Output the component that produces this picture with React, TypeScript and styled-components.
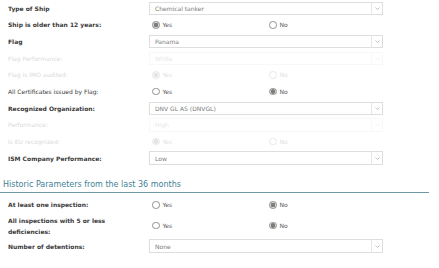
import styled, { createGlobalStyle } from 'styled-components'

const GlobalStyle = createGlobalStyle`
  body {
    margin: 0;
    background: #fff;
    font-family: 'DejaVu Sans', Verdana, sans-serif;
  }
`

const Page = styled.div`
  width: 439px;
  height: 268px;
  overflow: hidden;
`

const Section = styled.div<{ gapTop?: number }>`
  padding-left: 8px;
  padding-top: ${({ gapTop }) => gapTop || 0}px;
`

const Row = styled.div<{ disabled?: boolean; tall?: boolean }>`
  display: grid;
  grid-template-columns: 141px 234px;
  align-items: center;
  height: ${({ tall }) => (tall ? '24.7px' : '16.67px')};
  opacity: ${({ disabled }) => (disabled ? 0.2 : 1)};
`

const Label = styled.div<{ strong?: boolean; wrap?: boolean }>`
  font-size: 6px;
  line-height: 11px;
  color: #3a3a3a;
  font-weight: ${({ strong }) => (strong ? 700 : 400)};
  width: ${({ wrap }) => (wrap ? '110px' : 'auto')};
`

const Select = styled.div`
  display: flex;
  align-items: stretch;
  height: 13.5px;
  box-sizing: border-box;
  border: 1px solid #dedede;
  background: #fff;
`

const SelectValue = styled.div`
  flex: 1;
  display: flex;
  align-items: center;
  padding-left: 5px;
  font-size: 6px;
  color: #7a7a7a;
`

const Chevron = styled.div`
  width: 10px;
  border-left: 1px solid #e6e6e6;
  display: flex;
  align-items: center;
  justify-content: center;
`

const Radios = styled.div`
  display: grid;
  grid-template-columns: 117px 117px;
`

const Option = styled.div`
  display: flex;
  align-items: center;
  gap: 3px;
  padding-left: 3px;
  font-size: 6px;
  color: #555;
`

const Circle = styled.span<{ checked?: boolean }>`
  width: 7.5px;
  height: 7.5px;
  box-sizing: border-box;
  border-radius: 50%;
  border: 1px solid #8f8f8f;
  background: ${({ checked }) =>
    checked
      ? 'radial-gradient(circle, #7d7d7d 0 2px, #d9d9d9 2.5px)'
      : '#fff'};
`

const Heading = styled.h2`
  margin: 11px 10px 0 0;
  padding: 0 0 1px 3px;
  font-size: 8px;
  line-height: 13px;
  font-weight: 400;
  color: #3f7f97;
  border-bottom: 1px solid #6f98a6;
`

type Field =
  | { label: string; strong?: boolean; disabled?: boolean; tall?: boolean; select: string }
  | { label: string; strong?: boolean; disabled?: boolean; tall?: boolean; yes: boolean }

const shipFields: Field[] = [
  { label: 'Type of Ship', strong: true, select: 'Chemical tanker' },
  { label: 'Ship is older than 12 years:', strong: true, yes: true },
  { label: 'Flag', strong: true, select: 'Panama' },
  { label: 'Flag Performance:', disabled: true, select: 'White' },
  { label: 'Flag is IMO audited:', disabled: true, yes: true },
  { label: 'All Certificates issued by Flag:', yes: false },
  { label: 'Recognized Organization:', strong: true, select: 'DNV GL AS (DNVGL)' },
  { label: 'Performance:', disabled: true, select: 'High' },
  { label: 'Is EU recognized:', disabled: true, yes: true },
  { label: 'ISM Company Performance:', strong: true, select: 'Low' },
]

const historyFields: Field[] = [
  { label: 'At least one inspection:', strong: true, yes: false },
  { label: 'All inspections with 5 or less deficiencies:', strong: true, tall: true, yes: false },
  { label: 'Number of detentions:', strong: true, select: 'None' },
]

const FieldRow = ({ field }: { field: Field }) => (
  <Row disabled={field.disabled} tall={field.tall}>
    <Label strong={field.strong} wrap={field.tall}>
      {field.label}
    </Label>
    {'select' in field ? (
      <Select>
        <SelectValue>{field.select}</SelectValue>
        <Chevron>
          <svg width="5" height="3" viewBox="0 0 5 3">
            <path d="M0.5 0.5 L2.5 2.5 L4.5 0.5" fill="none" stroke="#a8a8a8" strokeWidth="0.7" />
          </svg>
        </Chevron>
      </Select>
    ) : (
      <Radios>
        <Option>
          <Circle checked={field.yes} />
          Yes
        </Option>
        <Option>
          <Circle checked={!field.yes} />
          No
        </Option>
      </Radios>
    )}
  </Row>
)

export default function App() {
  return (
    <Page>
      <GlobalStyle />
      <Section>
        {shipFields.map((f) => (
          <FieldRow key={f.label} field={f} />
        ))}
      </Section>
      <Heading>Historic Parameters from the last 36 months</Heading>
      <Section gapTop={4}>
        {historyFields.map((f) => (
          <FieldRow key={f.label} field={f} />
        ))}
      </Section>
    </Page>
  )
}
